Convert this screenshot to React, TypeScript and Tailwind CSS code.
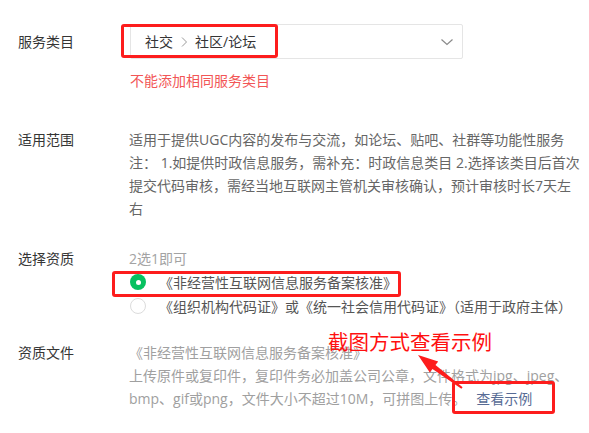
import React from "react";

const font = { fontFamily: '"Open Sans", "Noto Sans CJK SC", sans-serif' };

function Label({ children, className = "" }: { children: React.ReactNode; className?: string }) {
  return (
    <div className={`w-[111px] shrink-0 text-[14px] text-[#353535] ${className}`}>{children}</div>
  );
}

export default function App() {
  return (
    <div
      className="relative w-[589px] h-[433px] overflow-hidden bg-white pl-[18px]"
      style={font}
    >
      {/* 服务类目 */}
      <div className="flex items-start pt-[24px]">
        <Label className="h-[35px] flex items-center">服务类目</Label>
        <div className="flex flex-col">
          <div className="ml-[1px] flex h-[35px] w-[333px] items-center justify-between rounded-[2px] border border-[#e5e5e5] pl-[14px] pr-[8px] text-[14px] text-[#353535]">
            <div className="flex items-center">
              <span>社交</span>
              <svg width="8" height="12" viewBox="0 0 8 12" className="mx-[7px]">
                <path d="M2 1.5 L6.5 6 L2 10.5" fill="none" stroke="#9a9a9a" strokeWidth="1" />
              </svg>
              <span>社区/论坛</span>
            </div>
            <svg width="14" height="8" viewBox="0 0 14 8">
              <path d="M1.5 1.5 L7 6.5 L12.5 1.5" fill="none" stroke="#8a8a8a" strokeWidth="1.2" />
            </svg>
          </div>
          <div className="mt-[12px] ml-[1px] text-[14px] leading-[20px] text-[#f25656]">不能添加相同服务类目</div>
        </div>
      </div>

      {/* 适用范围 */}
      <div className="mt-[37px] flex items-start text-[14px] leading-[23px]">
        <Label className="leading-[23px]">适用范围</Label>
        <div className="w-[455px] text-[#666666]">
          适用于提供UGC内容的发布与交流，如论坛、贴吧、社群等功能性服务
          <br />
          注： 1.如提供时政信息服务，需补充：时政信息类目 2.选择该类目后首次提交代码审核，需经当地互联网主管机关审核确认，预计审核时长7天左右
        </div>
      </div>

      {/* 选择资质 */}
      <div className="mt-[27px] flex items-start text-[14px]">
        <Label className="leading-[23px]">选择资质</Label>
        <div className="flex flex-col">
          <div className="leading-[23px] text-[#a3a3a3]">2选1即可</div>
          <div className="flex h-[24px] items-center">
            <span className="flex h-[16px] w-[16px] items-center justify-center rounded-full bg-[#07c160] ml-[1px]">
              <span className="h-[5px] w-[5px] rounded-full bg-white" />
            </span>
            <span className="ml-[13px] text-[#555555]">《非经营性互联网信息服务备案核准》</span>
          </div>
          <div className="flex h-[24px] items-center">
            <span className="h-[16px] w-[16px] rounded-full border border-[#dcdcdc] ml-[1px]" />
            <span className="ml-[13px] text-[#555555]">《组织机构代码证》或《统一社会信用代码证》（适用于政府主体）</span>
          </div>
        </div>
      </div>

      {/* 资质文件 */}
      <div className="mt-[23px] flex items-start text-[14px] leading-[23px]">
        <Label className="leading-[23px]">资质文件</Label>
        <div className="w-[455px] text-[#a0a0a0]">
          <div>《非经营性互联网信息服务备案核准》</div>
          <div>
            上传原件或复印件，复印件务必加盖公司公章，文件格式为jpg、jpeg、bmp、gif或png，文件大小不超过10M，可拼图上传。
            <span className="ml-[10px] text-[#576b95]">查看示例</span>
          </div>
        </div>
      </div>

      {/* annotations */}
      <div className="absolute left-[121px] top-[24px] h-[34px] w-[157px] rounded-[3px] border-[3px] border-[#fd1d1d]" />
      <div className="absolute left-[112px] top-[271px] h-[26px] w-[289px] rounded-[3px] border-[3px] border-[#fd1d1d]" />
      <div className="absolute left-[452px] top-[381px] h-[33px] w-[103px] rounded-[3px] border-[3px] border-[#fd1d1d]" />
      <div className="absolute left-[328px] top-[330px] text-[20.5px] leading-[24px] text-[#ff1010] whitespace-nowrap">
        截图方式查看示例
      </div>
      <svg className="absolute left-[400px] top-[345px]" width="80" height="50" viewBox="0 0 80 50">
        <polygon
          points="18,10 38.2,16.4 35.5,20 62.6,42.2 61.4,43.8 32.5,24 29.8,27.6"
          fill="#fd1d1d"
        />
      </svg>
    </div>
  );
}
